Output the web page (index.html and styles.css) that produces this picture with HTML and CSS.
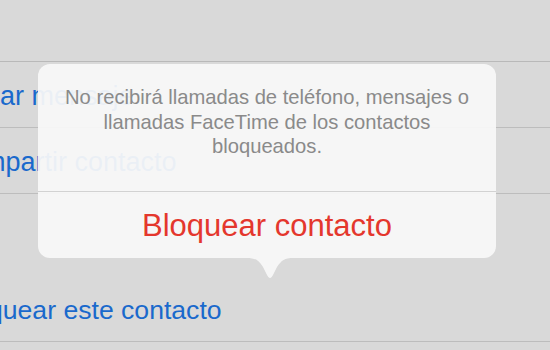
FILE: index.html
```html
<!DOCTYPE html>
<html lang="es">
<head>
<meta charset="utf-8">
<link rel="stylesheet" href="styles.css">
</head>
<body>
<div class="screen">
  <div class="top"></div>
  <div class="group">
    <div class="row"><span class="label label-a">ar mensaje</span></div>
    <div class="row"><span class="label label-b">mpartir contacto</span></div>
  </div>
  <div class="gap"></div>
  <div class="group">
    <div class="row"><span class="label label-c">quear este contacto</span></div>
  </div>

  <div class="popover">
    <div class="message">No recibirá llamadas de teléfono, mensajes o llamadas FaceTime de los contactos bloqueados.</div>
    <div class="action">Bloquear contacto</div>
    <svg class="arrow" width="48" height="22" viewBox="0 0 48 22">
      <path d="M0 0 C10 0 12 2 17 9 L21 17 C23 21 25 21 27 17 L31 9 C36 2 38 0 48 0 Z" fill="#f7f7f7"/>
    </svg>
  </div>
</div>
</body>
</html>
```
FILE: styles.css
```css
html, body {
  margin: 0;
  padding: 0;
}
body {
  width: 550px;
  height: 350px;
  overflow: hidden;
  background: #d9d9d9;
  font-family: "Liberation Sans", Arial, sans-serif;
}
.screen {
  position: relative;
  width: 550px;
  height: 350px;
  overflow: hidden;
}
.top {
  height: 61px;
  border-bottom: 1px solid #b9b9b9;
}
.row {
  height: 65px;
  border-bottom: 1px solid #bdbdbd;
  display: flex;
  align-items: center;
}
.label {
  color: #1a69cc;
  font-size: 27px;
  white-space: nowrap;
  padding-top: 4px;
}
.label-a {
  margin-left: 0;
}
.label-b {
  margin-left: -17px;
}
.label-c {
  margin-left: -12px;
  font-size: 26.6px;
}
.gap {
  height: 82px;
}
.popover {
  position: absolute;
  left: 38px;
  top: 64px;
  width: 458px;
  height: 194px;
  background: rgba(248, 248, 248, 0.94);
  border-radius: 12px;
  display: flex;
  flex-direction: column;
}
.message {
  height: 128px;
  box-sizing: border-box;
  padding: 21px 22px 0;
  text-align: center;
  color: #8a8a8a;
  font-size: 20.2px;
  line-height: 24.5px;
  border-bottom: 1px solid #d2d2d2;
}
.action {
  flex: 1;
  display: flex;
  align-items: center;
  justify-content: center;
  color: #e4372d;
  font-size: 31px;
  padding-top: 2px;
}
.arrow {
  position: absolute;
  left: 208px;
  top: 194px;
  opacity: 0.97;
}
```
